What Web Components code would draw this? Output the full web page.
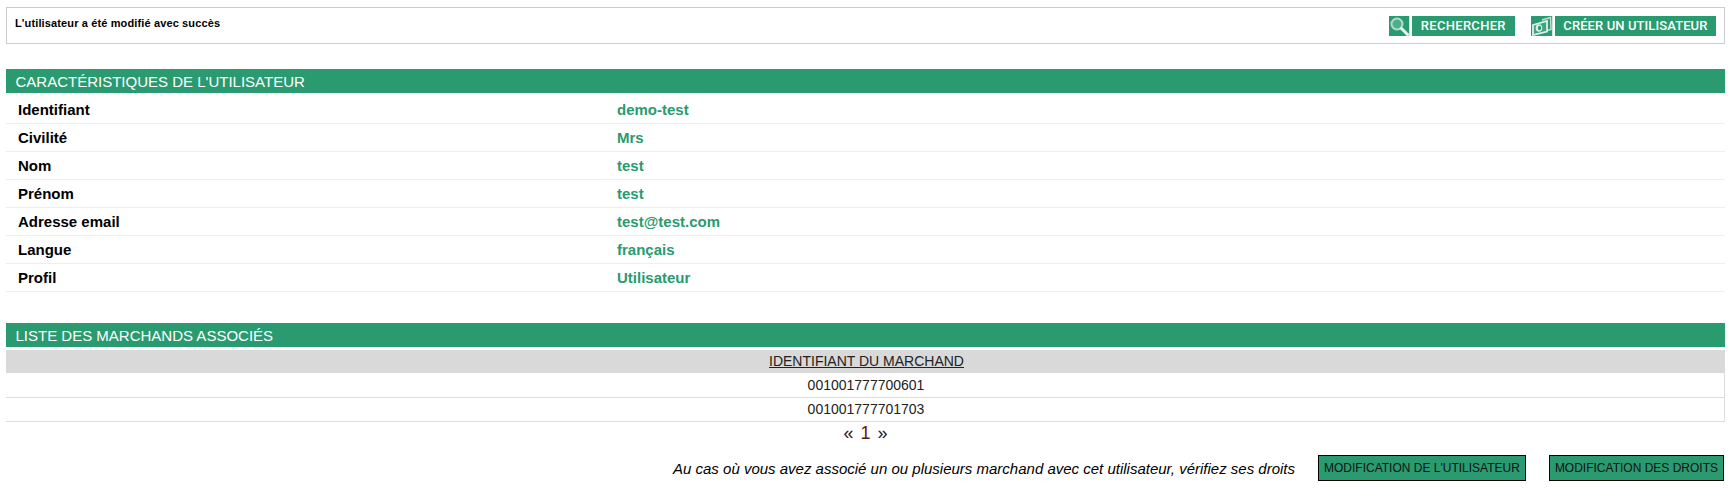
<!DOCTYPE html>
<html lang="fr">
<head>
<meta charset="utf-8">
<title>Utilisateur</title>
<style>
  html, body { margin: 0; padding: 0; background: #fff; }
  body { font-family: "Liberation Sans", Arial, sans-serif; color: #000; }
  user-page { width: 1719px; margin-left: 6px; }
</style>
</head>
<body>
<user-page>
  <notice-bar>
    L'utilisateur a été modifié avec succès
    <tool-button slot="actions" icon="search" style="--pad:9px;--ls:.3px">RECHERCHER</tool-button>
    <tool-button slot="actions" icon="money" style="--pad:8.5px;--ls:.1px;--ico:21px">CRÉER UN UTILISATEUR</tool-button>
  </notice-bar>

  <section-title style="margin-top:25px">CARACTÉRISTIQUES DE L'UTILISATEUR</section-title>
  <detail-list>
    <detail-row label="Identifiant">demo-test</detail-row>
    <detail-row label="Civilité">Mrs</detail-row>
    <detail-row label="Nom">test</detail-row>
    <detail-row label="Prénom">test</detail-row>
    <detail-row label="Adresse email">test@test.com</detail-row>
    <detail-row label="Langue">français</detail-row>
    <detail-row label="Profil">Utilisateur</detail-row>
  </detail-list>

  <section-title style="margin-top:31px">LISTE DES MARCHANDS ASSOCIÉS</section-title>
  <merchant-table heading="IDENTIFIANT DU MARCHAND">
    <merchant-row>001001777700601</merchant-row>
    <merchant-row>001001777701703</merchant-row>
  </merchant-table>
  <page-nav current="1"></page-nav>

  <action-bar>
    <em>Au cas où vous avez associé un ou plusieurs marchand avec cet utilisateur, vérifiez ses droits</em>
    <action-button slot="actions">MODIFICATION DE L'UTILISATEUR</action-button>
    <action-button slot="actions">MODIFICATION DES DROITS</action-button>
  </action-bar>
</user-page>

<script>
const GREEN = '#2a9a70';

// small helper, every element just stamps its own shadow root
class Base extends HTMLElement {
  constructor() {
    super();
    this.attachShadow({ mode: 'open' });
    this.shadowRoot.innerHTML = this.render();
  }
  render() { return '<slot></slot>'; }
}

class UserPage extends Base {
  render() {
    return `<style>:host{display:block}</style><slot></slot>`;
  }
}

class NoticeBar extends Base {
  render() {
    return `
    <style>
      :host {
        display: flex;
        justify-content: space-between;
        box-sizing: border-box;
        height: 37px;
        margin-top: 7px;
        border: 1px solid #ccc;
        padding: 8px 8px 0 8px;
        font-size: 11px;
        font-weight: 700;
        letter-spacing: .13px;
        line-height: 15px;
      }
      .actions { display: flex; gap: 16px; letter-spacing: 0; }
    </style>
    <div><slot></slot></div>
    <div class="actions"><slot name="actions"></slot></div>`;
  }
}

const ICONS = {
  search: `<svg width="20" height="20" viewBox="0 0 20 20">
      <circle cx="8" cy="8" r="5.5" fill="#4fae8b" stroke="#b5ddcc" stroke-width="2"/>
      <path d="M12.5 12.5l6 6" stroke="#e9f5f0" stroke-width="3" stroke-linecap="round"/>
    </svg>`,
  money: `<svg width="21" height="20" viewBox="0 0 21 20">
      <path d="M11 4l8.5-2.5.5 12-4 1" fill="none" stroke="#bfe1d3" stroke-width="1.5"/>
      <path d="M2 9l14-4v10.500L2 19z" fill="#3ea582" stroke="#dff0e9" stroke-width="1.800"/>
      <ellipse cx="8" cy="12" rx="3.300" ry="3.800" fill="#dff0e9"/>
      <ellipse cx="8.500" cy="12" rx="1.600" ry="2.200" fill="${GREEN}"/>
    </svg>`
};

class ToolButton extends Base {
  render() {
    return `
    <style>
      :host { display: inline-flex; height: 20px; }
      .ico {
        width: var(--ico, 20px); height: 20px;
        background: ${GREEN};
        border-right: 1px solid #cfe6db;
      }
      .ico svg { display: block; }
      .txt {
        margin-left: 2px;
        padding: 0 var(--pad, 9px);
        background: ${GREEN};
        color: #fff;
        font: 500 13px/20px Roboto, sans-serif;
        letter-spacing: var(--ls, .12px);
      }
    </style>
    <span class="ico">${ICONS[this.getAttribute('icon')] || ''}</span>
    <span class="txt"><slot></slot></span>`;
  }
}

class SectionTitle extends Base {
  render() {
    return `
    <style>
      :host {
        display: block;
        height: 24px;
        padding-left: 9.5px;
        background: ${GREEN};
        color: #fff;
        font-size: 15px;
        line-height: 25px;
      }
    </style>
    <slot></slot>`;
  }
}

class DetailList extends Base {
  render() {
    return `<style>:host{display:block;padding-top:3px}</style><slot></slot>`;
  }
}

class DetailRow extends Base {
  render() {
    return `
    <style>
      :host {
        display: grid;
        grid-template-columns: 599px 1fr;
        box-sizing: border-box;
        height: 28px;
        padding: 1px 0 0 12px;
        border-bottom: 1px solid #eee;
        font-size: 15px;
        font-weight: 700;
        line-height: 26px;
      }
      .val { color: ${GREEN}; }
    </style>
    <span>${this.getAttribute('label')}</span>
    <span class="val"><slot></slot></span>`;
  }
}

class MerchantTable extends Base {
  render() {
    return `
    <style>
      :host { display: block; margin-top: 3px; font-size: 14px; text-align: center; }
      .head {
        height: 23px;
        padding-left: 2px;
        background: #d9d9d9;
        color: #222;
        line-height: 23px;
        text-decoration: underline;
      }
      .rows { border-right: 1px solid #ddd; padding: 1px 0 0 2px; }
    </style>
    <div class="head">${this.getAttribute('heading')}</div>
    <div class="rows"><slot></slot></div>`;
  }
}

class MerchantRow extends Base {
  render() {
    return `
    <style>
      :host {
        display: block;
        box-sizing: border-box;
        height: 24px;
        margin-left: -2px;
        padding-left: 2px;
        border-bottom: 1px solid #ddd;
        color: #222;
        line-height: 23px;
      }
    </style>
    <slot></slot>`;
  }
}

class PageNav extends Base {
  render() {
    return `
    <style>
      :host {
        display: block;
        height: 22px;
        text-align: center;
        color: #222;
        font-size: 18px;
        line-height: 23px;
      }
      b { font-weight: 400; color: #5a1a1a; margin: 0 2px; }
    </style>
    « <b>${this.getAttribute('current')}</b> »`;
  }
}

class ActionBar extends Base {
  render() {
    return `
    <style>
      :host {
        display: flex;
        justify-content: flex-end;
        align-items: center;
        gap: 23px;
        margin: 11px 1px 0 0;
        font-size: 15px;
      }
      .actions { display: flex; gap: 23px; }
    </style>
    <div><slot></slot></div>
    <div class="actions"><slot name="actions"></slot></div>`;
  }
}

class ActionButton extends Base {
  render() {
    return `
    <style>
      :host {
        display: block;
        box-sizing: border-box;
        height: 26px;
        padding: 0 5px;
        border: 1px solid #000;
        background: ${GREEN};
        color: #111;
        font-size: 12px;
        line-height: 24px;
      }
    </style>
    <slot></slot>`;
  }
}

customElements.define('user-page', UserPage);
customElements.define('notice-bar', NoticeBar);
customElements.define('tool-button', ToolButton);
customElements.define('section-title', SectionTitle);
customElements.define('detail-list', DetailList);
customElements.define('detail-row', DetailRow);
customElements.define('merchant-table', MerchantTable);
customElements.define('merchant-row', MerchantRow);
customElements.define('page-nav', PageNav);
customElements.define('action-bar', ActionBar);
customElements.define('action-button', ActionButton);
</script>
</body>
</html>
